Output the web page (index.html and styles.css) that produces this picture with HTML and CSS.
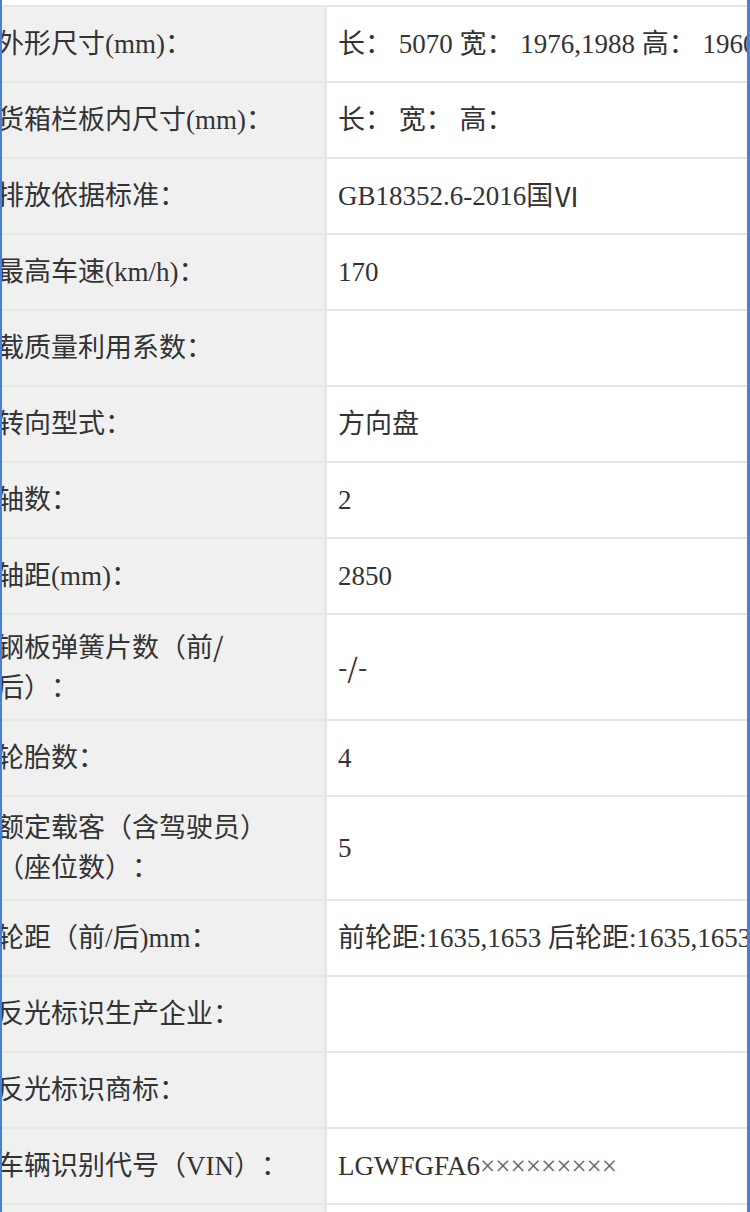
FILE: index.html
```html
<!DOCTYPE html>
<html lang="zh-CN">
<head>
<meta charset="utf-8">
<title>车辆参数</title>
<link rel="stylesheet" href="styles.css">
</head>
<body>
<div class="frame">
  <div class="spec">
    <div class="label"><span class="txt">外形尺寸(mm)：</span></div>
    <div class="value">长： 5070 宽： 1976,1988 高： 1960</div>

    <div class="label"><span class="txt">货箱栏板内尺寸(mm)：</span></div>
    <div class="value">长： 宽： 高：</div>

    <div class="label"><span class="txt">排放依据标准：</span></div>
    <div class="value">GB18352.6-2016国<span class="sans">Ⅵ</span></div>

    <div class="label"><span class="txt">最高车速(km/h)：</span></div>
    <div class="value">170</div>

    <div class="label"><span class="txt">载质量利用系数：</span></div>
    <div class="value"></div>

    <div class="label"><span class="txt">转向型式：</span></div>
    <div class="value">方向盘</div>

    <div class="label"><span class="txt">轴数：</span></div>
    <div class="value">2</div>

    <div class="label"><span class="txt">轴距(mm)：</span></div>
    <div class="value">2850</div>

    <div class="label"><span class="txt">钢板弹簧片数（前<span class="sans">/</span>后）：</span></div>
    <div class="value"><span class="sans">-/-</span></div>

    <div class="label"><span class="txt">轮胎数：</span></div>
    <div class="value">4</div>

    <div class="label"><span class="txt">额定载客（含驾驶员）（座位数）：</span></div>
    <div class="value">5</div>

    <div class="label"><span class="txt">轮距（前/后)mm：</span></div>
    <div class="value">前轮距:1635,1653 后轮距:1635,1653</div>

    <div class="label"><span class="txt">反光标识生产企业：</span></div>
    <div class="value"></div>

    <div class="label"><span class="txt">反光标识商标：</span></div>
    <div class="value"></div>

    <div class="label"><span class="txt">车辆识别代号（VIN）：</span></div>
    <div class="value">LGWFGFA6<span class="mask">×××××××××</span></div>

    <div class="label"><span class="txt"></span></div>
    <div class="value"></div>
  </div>
</div>
</body>
</html>
```

FILE: styles.css
```css
html, body {
  margin: 0;
  padding: 0;
  background: #ffffff;
}

body {
  font-family: "Liberation Serif", "Noto Sans CJK SC", serif;
  font-size: 27px;
  color: #333333;
  text-spacing-trim: space-all;
}

.frame {
  border-left: 2px solid #4780d4;
  border-right: 3px solid #4780d4;
  padding-top: 5px;
  overflow: hidden;
  background: #ffffff;
}

.spec {
  display: grid;
  grid-template-columns: 322px 1fr;
  column-gap: 3px;
  row-gap: 2px;
  padding-top: 2px;
  background: #e6e6e6;
}

.label,
.value {
  min-height: 74px;
  box-sizing: border-box;
  display: flex;
  align-items: center;
  line-height: 40px;
  padding: 11px 0;
}

.label {
  background: #f0f0f0;
}

.label .txt {
  display: block;
  margin-left: -5px;
  width: 296px;
}

.value {
  background: #ffffff;
  padding-left: 11px;
  white-space: nowrap;
  overflow: hidden;
}

.sans {
  font-family: "Noto Sans CJK SC", "Liberation Sans", sans-serif;
}

.mask {
  color: #666666;
}
```
